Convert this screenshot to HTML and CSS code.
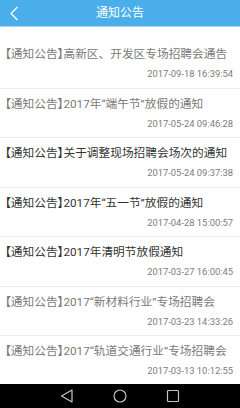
FILE: index.html
```html
<!DOCTYPE html>
<html lang="zh-CN">
<head>
<meta charset="utf-8">
<title>通知公告</title>
<link rel="stylesheet" href="styles.css">
</head>
<body>
<div class="screen">
  <header class="topbar">
    <svg class="back" width="20" height="26" viewBox="0 0 20 26"><polyline points="17.5,7 11,13.5 17.5,20" fill="none" stroke="#fff" stroke-width="1.3"/></svg>
    <h1 class="title">通知公告</h1>
  </header>
  <main class="list">
    <div class="item read"><div class="t"><span class="br">【</span>通知公告<span class="br">】</span>高新区、开发区专场招聘会通告</div><div class="d">2017-09-18 16:39:54</div></div>
    <div class="item read"><div class="t"><span class="br">【</span>通知公告<span class="br">】</span>2017年“端午节”放假的通知</div><div class="d">2017-05-24 09:46:28</div></div>
    <div class="item"><div class="t"><span class="br">【</span>通知公告<span class="br">】</span>关于调整现场招聘会场次的通知</div><div class="d">2017-05-24 09:37:38</div></div>
    <div class="item"><div class="t"><span class="br">【</span>通知公告<span class="br">】</span>2017年“五一节”放假的通知</div><div class="d">2017-04-28 15:00:57</div></div>
    <div class="item"><div class="t"><span class="br">【</span>通知公告<span class="br">】</span>2017年清明节放假通知</div><div class="d">2017-03-27 16:00:45</div></div>
    <div class="item read"><div class="t"><span class="br">【</span>通知公告<span class="br">】</span>2017“新材料行业”专场招聘会</div><div class="d">2017-03-23 14:33:26</div></div>
    <div class="item read"><div class="t"><span class="br">【</span>通知公告<span class="br">】</span>2017“轨道交通行业”专场招聘会</div><div class="d">2017-03-13 10:12:55</div></div>
  </main>
  <nav class="navbar">
    <svg width="14" height="14" viewBox="0 0 14 14"><polygon points="12,1 12,13 1.5,7" fill="none" stroke="#c4c4c4" stroke-width="1.2" stroke-linejoin="round"/></svg>
    <svg width="14" height="14" viewBox="0 0 14 14"><circle cx="7" cy="7" r="6" fill="none" stroke="#c4c4c4" stroke-width="1.2"/></svg>
    <svg width="14" height="14" viewBox="0 0 14 14"><rect x="1.5" y="1.5" width="11" height="11" rx="1" fill="none" stroke="#c4c4c4" stroke-width="1.2"/></svg>
  </nav>
</div>
</body>
</html>
```

FILE: styles.css
```css
html, body {
  margin: 0;
  padding: 0;
}
body {
  width: 240px;
  height: 408px;
  overflow: hidden;
  background: #fff;
  font-family: Roboto, "Noto Sans CJK SC", sans-serif;
}
.screen {
  display: flex;
  flex-direction: column;
  height: 408px;
}
.topbar {
  flex: 0 0 26px;
  height: 26px;
  background: #4aaeea;
  border-bottom: 1px solid #a9d6f5;
  position: relative;
  display: flex;
  align-items: center;
  justify-content: center;
}
.back {
  position: absolute;
  left: 0;
  top: 0;
}
.title {
  margin: 0;
  font-size: 12px;
  font-weight: normal;
  color: #fff;
  line-height: 26px;
}
.list {
  flex: 1 1 auto;
  overflow: hidden;
  padding-top: 12px;
}
.item {
  box-sizing: border-box;
  height: 49.5px;
  padding: 7px 7px 0 5px;
  border-bottom: 1px solid #ececec;
}
.t {
  font-size: 11.7px;
  line-height: 16px;
  color: #333;
  white-space: nowrap;
}
.item.read .t {
  color: #7a7a7a;
}
.br {
  font-feature-settings: "halt";
}
.d {
  margin-top: 6px;
  font-size: 9.4px;
  line-height: 12px;
  color: #7c7c7c;
  text-align: right;
}
.navbar {
  flex: 0 0 24px;
  background: #000;
  display: flex;
  align-items: center;
  justify-content: center;
  gap: 39px;
}
```
